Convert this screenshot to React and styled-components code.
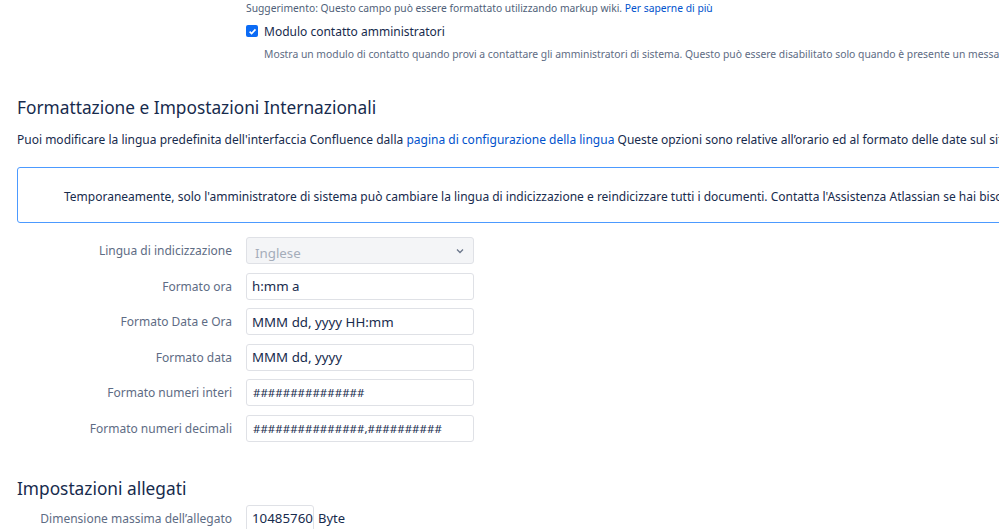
import React from 'react'
import styled, { createGlobalStyle } from 'styled-components'

const GlobalStyle = createGlobalStyle`
  html, body {
    margin: 0;
    padding: 0;
    background: #ffffff;
  }
  body {
    font-family: "Noto Sans", "Open Sans", sans-serif;
    color: #172b4d;
  }
`

const Page = styled.div`
  width: 999px;
  height: 529px;
  overflow: hidden;
  padding-left: 17px;
  box-sizing: border-box;
`

const Indented = styled.div`
  margin-left: 229px;
`

const Hint = styled.div`
  font-size: 10.3px;
  line-height: 16px;
  color: #505f79;
  white-space: nowrap;
`

const Link = styled.a`
  color: #0052cc;
  text-decoration: none;
`

const CheckRow = styled.label`
  display: flex;
  align-items: center;
  gap: 6px;
  margin-top: 5px;
  height: 20px;
  font-size: 12px;
  color: #172b4d;
`

const Box = styled.span`
  width: 12px;
  height: 12px;
  border-radius: 2px;
  background: #0b6bf5;
  display: flex;
  align-items: center;
  justify-content: center;
`

const Desc = styled.div`
  margin-top: 5px;
  margin-left: 18px;
  font-size: 10.35px;
  line-height: 16px;
  color: #5e6c84;
  white-space: nowrap;
`

const Heading = styled.h2`
  margin: ${(p) => p.top}px 0 0;
  font-size: 17.3px;
  line-height: 24px;
  font-weight: 400;
  color: #172b4d;
  white-space: nowrap;
`

const Intro = styled.p`
  margin: 10px 0 0;
  font-size: 12px;
  line-height: 20px;
  white-space: nowrap;
  color: #172b4d;
`

const Notice = styled.div`
  margin-top: 17px;
  width: 1100px;
  height: 56px;
  box-sizing: border-box;
  border: 1px solid #4c9aff;
  border-radius: 3px;
  display: flex;
  align-items: center;
  padding: 2px 0 0 46px;
  font-size: 12px;
  white-space: nowrap;
  color: #172b4d;
`

const Form = styled.div`
  margin-top: ${(p) => p.top}px;
  display: flex;
  flex-direction: column;
  gap: 8.6px;
`

const Row = styled.div`
  display: grid;
  grid-template-columns: 215px auto;
  column-gap: 14px;
  align-items: center;
`

const Label = styled.div`
  text-align: right;
  font-size: 12px;
  color: #5e6c84;
  white-space: nowrap;
`

const Field = styled.div`
  display: flex;
  align-items: center;
  gap: 4px;
  font-size: 13px;
  color: #172b4d;
`

const Input = styled.div`
  width: ${(p) => p.w || 228}px;
  height: 27px;
  box-sizing: border-box;
  border: 1px solid #dfe1e6;
  border-radius: 3px;
  background: ${(p) => (p.disabled ? '#f4f5f7' : '#ffffff')};
  color: ${(p) => (p.disabled ? '#a5adba' : '#172b4d')};
  padding: 0 ${(p) => (p.disabled ? 8 : 5)}px;
  display: flex;
  align-items: center;
  justify-content: space-between;
  font-size: 13.3px;
  overflow: hidden;
  white-space: nowrap;
`

const Muted = styled.span`
  padding-top: 4px;
`

const Hashes = styled.span`
  font-size: 11.5px;
  padding-left: 1px;
`

const Chevron = () => (
  <svg width="10" height="10" viewBox="0 0 10 10">
    <path d="M2 3.5 L5 6.5 L8 3.5" fill="none" stroke="#6b778c" strokeWidth="1.3" />
  </svg>
)

const rows = [
  { label: 'Formato ora', value: 'h:mm a' },
  { label: 'Formato Data e Ora', value: 'MMM dd, yyyy HH:mm' },
  { label: 'Formato data', value: 'MMM dd, yyyy' },
  { label: 'Formato numeri interi', value: '###############', hash: true },
  { label: 'Formato numeri decimali', value: '###############,##########', hash: true },
]

export default function App() {
  return (
    <Page>
      <GlobalStyle />
      <Indented>
        <Hint>
          Suggerimento: Questo campo può essere formattato utilizzando markup wiki. <Link>Per saperne di più</Link>
        </Hint>
        <CheckRow>
          <Box>
            <svg width="9" height="9" viewBox="0 0 10 10">
              <path d="M1.8 5.2 L4 7.3 L8.3 2.6" fill="none" stroke="#fff" strokeWidth="1.8" />
            </svg>
          </Box>
          Modulo contatto amministratori
        </CheckRow>
        <Desc>
          Mostra un modulo di contatto quando provi a contattare gli amministratori di sistema. Questo può essere disabilitato solo quando è presente un messaggio personalizzato.
        </Desc>
      </Indented>

      <Heading top={34}>Formattazione e Impostazioni Internazionali</Heading>
      <Intro>
        Puoi modificare la lingua predefinita dell'interfaccia Confluence dalla{' '}
        <Link>pagina di configurazione della lingua</Link> Queste opzioni sono relative all’orario ed al formato delle date sul sito.
      </Intro>
      <Notice>
        Temporaneamente, solo l'amministratore di sistema può cambiare la lingua di indicizzazione e reindicizzare tutti i documenti. Contatta l'Assistenza Atlassian se hai bisogno di aiuto.
      </Notice>

      <Form top={14}>
        <Row>
          <Label>Lingua di indicizzazione</Label>
          <Field>
            <Input disabled>
              <Muted>Inglese</Muted>
              <Chevron />
            </Input>
          </Field>
        </Row>
        {rows.map((r) => (
          <Row key={r.label}>
            <Label>{r.label}</Label>
            <Field>
              <Input>{r.hash ? <Hashes>{r.value}</Hashes> : r.value}</Input>
            </Field>
          </Row>
        ))}
      </Form>

      <Heading top={35}>Impostazioni allegati</Heading>
      <Form top={4}>
        <Row>
          <Label>Dimensione massima dell’allegato</Label>
          <Field>
            <Input w={68}>104857600</Input>
            Byte
          </Field>
        </Row>
      </Form>
    </Page>
  )
}
